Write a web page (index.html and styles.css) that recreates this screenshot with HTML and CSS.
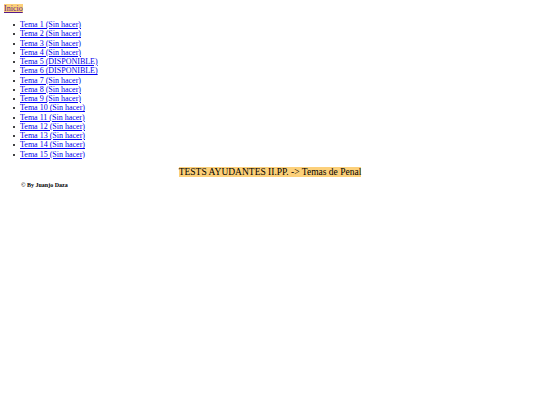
FILE: index.html
```html
<!DOCTYPE html>
<html>
<head>
<meta charset="utf-8">
<link rel="stylesheet" href="styles.css">
</head>
<body>
<a class="home" href="#">Inicio</a>
<ul class="topics">
<li><a href="#">Tema 1 (Sin hacer)</a></li>
<li><a href="#">Tema 2 (Sin hacer)</a></li>
<li><a href="#">Tema 3 (Sin hacer)</a></li>
<li><a href="#">Tema 4 (Sin hacer)</a></li>
<li><a href="#">Tema 5 (DISPONIBLE)</a></li>
<li><a href="#">Tema 6 (DISPONIBLE)</a></li>
<li><a href="#">Tema 7 (Sin hacer)</a></li>
<li><a href="#">Tema 8 (Sin hacer)</a></li>
<li><a href="#">Tema 9 (Sin hacer)</a></li>
<li><a href="#">Tema 10 (Sin hacer)</a></li>
<li><a href="#">Tema 11 (Sin hacer)</a></li>
<li><a href="#">Tema 12 (Sin hacer)</a></li>
<li><a href="#">Tema 13 (Sin hacer)</a></li>
<li><a href="#">Tema 14 (Sin hacer)</a></li>
<li><a href="#">Tema 15 (Sin hacer)</a></li>
</ul>
<div class="title-row"><span class="title">TESTS AYUDANTES II.PP. -&gt; Temas de Penal</span></div>
<p class="credit">© By Juanjo Daza</p>
</body>
</html>
```
FILE: styles.css
```css
html, body {
  background: #ffffff;
}
body {
  margin: 4px;
  font-family: "Liberation Serif", "Times New Roman", serif;
  font-size: 8px;
  color: #000000;
}
a {
  color: #0000ee;
}
.home {
  color: #551a8b;
  background: #fcd07a;
}
.topics {
  margin: 7px 0 8px;
  padding-left: 16px;
  list-style: none;
}
.topics li {
  line-height: 9.25px;
}
.topics li::before {
  content: "";
  display: inline-block;
  width: 2px;
  height: 2px;
  border-radius: 50%;
  background: #000000;
  margin-left: -7px;
  margin-right: 5px;
  vertical-align: 1px;
}
.title-row {
  text-align: center;
}
.title {
  font-size: 9.5px;
  background: #fcd07a;
}
.credit {
  margin: 5px 0 0 17px;
  font-size: 6px;
  font-weight: bold;
}
```
